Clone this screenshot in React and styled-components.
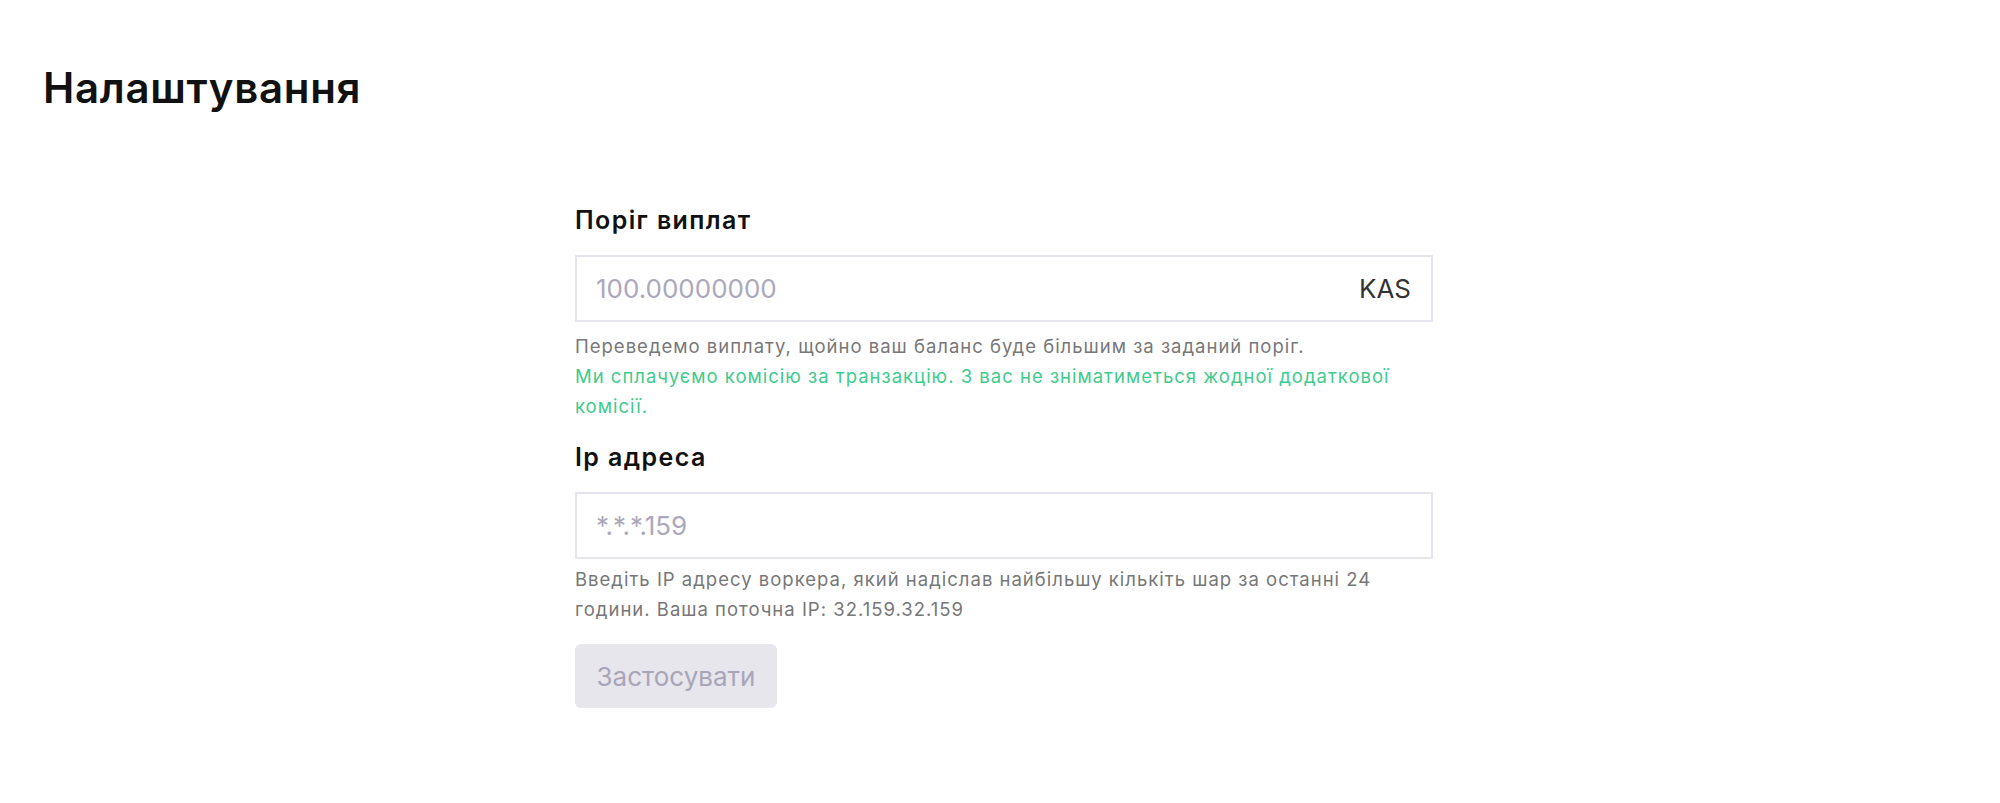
import React from 'react';
import styled, { createGlobalStyle } from 'styled-components';

const GlobalStyle = createGlobalStyle`
  html, body {
    margin: 0;
    padding: 0;
    background: #ffffff;
  }
  body {
    font-family: Inter, "Noto Sans", sans-serif;
    color: #111;
  }
`;

const Page = styled.div`
  padding: 62px 43px 80px 43px;
`;

const Title = styled.h1`
  margin: 0;
  font-size: 42px;
  font-weight: 600;
  letter-spacing: 0.7px;
  color: #111;
  line-height: 52px;
`;

const FormWrap = styled.div`
  display: flex;
  justify-content: center;
  padding-left: 8px;
  margin-top: 91px;
`;

const Form = styled.form`
  width: 858px;
  display: flex;
  flex-direction: column;
`;

const Field = styled.div`
  display: flex;
  flex-direction: column;
  margin-bottom: ${p => p.gap || 0}px;
`;

const Label = styled.label`
  font-size: 25px;
  font-weight: 600;
  letter-spacing: 1.4px;
  color: #111;
  line-height: 30px;
  margin-bottom: 20px;
`;

const InputBox = styled.div`
  height: 67px;
  box-sizing: border-box;
  border: 2px solid #e6e5ee;
  display: flex;
  align-items: center;
  padding: 0 20px 0 19px;
`;

const Input = styled.input`
  flex: 1;
  border: none;
  outline: none;
  background: transparent;
  font-family: Inter, "Noto Sans", sans-serif;
  font-size: 26px;
  color: #111;
  padding: 0;
  &::placeholder {
    color: #aca8bb;
  }
`;

const Suffix = styled.span`
  font-size: 26px;
  color: #333;
`;

const Hint = styled.div`
  font-size: 18.5px;
  letter-spacing: 1px;
  line-height: 30px;
  color: ${p => (p.green ? '#3fcb8b' : '#777777')};
`;

const HintBlock = styled.div`
  margin-top: ${p => p.top}px;
`;

const Button = styled.button`
  align-self: flex-start;
  margin-top: 20px;
  width: 202px;
  height: 64px;
  border: none;
  border-radius: 6px;
  background: #e6e6ec;
  color: #a9a5b8;
  font-family: Inter, "Noto Sans", sans-serif;
  font-size: 26px;
  cursor: default;
`;

export default function App() {
  return (
    <>
      <GlobalStyle />
      <Page>
        <Title>Налаштування</Title>
        <FormWrap>
          <Form onSubmit={e => e.preventDefault()}>
            <Field gap={21}>
              <Label>Поріг виплат</Label>
              <InputBox>
                <Input placeholder="100.00000000" />
                <Suffix>KAS</Suffix>
              </InputBox>
              <HintBlock top={9}>
                <Hint>Переведемо виплату, щойно ваш баланс буде більшим за заданий поріг.</Hint>
                <Hint green>
                  Ми сплачуємо комісію за транзакцію. З вас не зніматиметься жодної додаткової комісії.
                </Hint>
              </HintBlock>
            </Field>
            <Field>
              <Label>Ip адреса</Label>
              <InputBox>
                <Input placeholder="*.*.*.159" />
              </InputBox>
              <HintBlock top={5}>
                <Hint>
                  Введіть IP адресу воркера, який надіслав найбільшу кількіть шар за останні 24 години. Ваша поточна IP: 32.159.32.159
                </Hint>
              </HintBlock>
            </Field>
            <Button type="button" disabled>Застосувати</Button>
          </Form>
        </FormWrap>
      </Page>
    </>
  );
}
